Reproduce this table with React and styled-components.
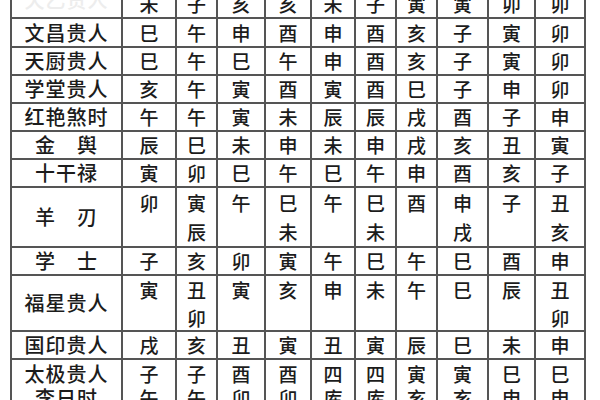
import React from "react";
import styled, { createGlobalStyle } from "styled-components";

const Global = createGlobalStyle`
  html, body { margin: 0; padding: 0; background: #ffffff; overflow: hidden; }
  body { width: 600px; height: 400px; }
`;

const COLS = [111, 54, 41, 48, 46, 44, 41, 41, 51, 47, 50];

const ROWS = [
  { label: "", faint: "天乙贵人", h: 29, values: ["未", "子", "亥", "亥", "未", "子", "寅", "寅", "卯", "卯"] },
  { label: "文昌贵人", h: 29, values: ["巳", "午", "申", "酉", "申", "酉", "亥", "子", "寅", "卯"] },
  { label: "天厨贵人", h: 28, values: ["巳", "午", "巳", "午", "申", "酉", "亥", "子", "寅", "卯"] },
  { label: "学堂贵人", h: 28, values: ["亥", "午", "寅", "酉", "寅", "酉", "巳", "子", "申", "卯"] },
  { label: "红艳煞时", h: 28, values: ["午", "午", "寅", "未", "辰", "辰", "戌", "酉", "子", "申"] },
  { label: "金　舆", h: 28, values: ["辰", "巳", "未", "申", "未", "申", "戌", "亥", "丑", "寅"] },
  { label: "十干禄", h: 28, values: ["寅", "卯", "巳", "午", "巳", "午", "申", "酉", "亥", "子"] },
  { label: "羊　刃", h: 60, lh: 29, pad: 0, values: ["卯", "寅辰", "午", "巳未", "午", "巳未", "酉", "申戌", "子", "丑亥"] },
  { label: "学　士", h: 28, values: ["子", "亥", "卯", "寅", "午", "巳", "午", "巳", "酉", "申"] },
  { label: "福星贵人", h: 56, lh: 28, pad: 0, values: ["寅", "丑卯", "寅", "亥", "申", "未", "午", "巳", "辰", "丑卯"] },
  { label: "国印贵人", h: 28, values: ["戌", "亥", "丑", "寅", "丑", "寅", "辰", "巳", "未", "申"] },
  { label: "太极贵人\n李日时", h: 60, lh: 24, pad: 2, stackLabel: true, values: ["子午", "子午", "酉卯", "酉卯", "四库", "四库", "寅亥", "寅亥", "巳申", "巳申"] },
];

const Page = styled.div`
  width: 600px;
  height: 400px;
  overflow: hidden;
  background: #ffffff;
  padding-left: 10px;
  box-sizing: border-box;
`;

const Table = styled.div`
  display: grid;
  grid-template-columns: ${COLS.map((c) => `${c}px`).join(" ")};
  grid-template-rows: ${ROWS.map((r) => `${r.h}px`).join(" ")};
  width: max-content;
  margin-top: -10px;
  border-left: 2px solid #555;
  font-family: "Noto Sans CJK SC", "Noto Sans CJK TC", sans-serif;
  color: #1c1c1c;
`;

const Cell = styled.div`
  box-sizing: border-box;
  border-right: 2px solid #555;
  border-bottom: 2px solid #555;
  display: flex;
  flex-direction: column;
  align-items: center;
  justify-content: ${(p) => (p.$top ? "flex-start" : "center")};
  padding-top: ${(p) => (p.$top ? `${p.$pad}px` : "0")};
  overflow: hidden;
`;

const Label = styled(Cell)`
  font-size: 20px;
  font-weight: 500;
  letter-spacing: 1px;
  white-space: pre;
  line-height: ${(p) => (p.$lh ? `${p.$lh}px` : "28px")};
  text-align: center;
`;

const Faint = styled.span`
  color: #ededed;
  margin-top: -8px;
`;

const Char = styled.span`
  display: block;
  font-size: 19px;
  font-weight: 500;
  line-height: ${(p) => `${p.$lh}px`};
`;

export default function App() {
  return (
    <>
      <Global />
      <Page>
        <Table>
          {ROWS.map((row, ri) => {
            const multi = row.values.some((v) => v.length > 1);
            const lh = row.lh || 26;
            return (
              <React.Fragment key={ri}>
                <Label $top={row.stackLabel} $pad={row.pad || 0} $lh={row.stackLabel ? lh : 0}>
                  {row.faint ? <Faint>{row.faint}</Faint> : row.label}
                </Label>
                {row.values.map((v, ci) => (
                  <Cell key={ci} $top={multi} $pad={row.pad || 0}>
                    {v.split("").map((ch, k) => (
                      <Char key={k} $lh={lh}>
                        {ch}
                      </Char>
                    ))}
                  </Cell>
                ))}
              </React.Fragment>
            );
          })}
        </Table>
      </Page>
    </>
  );
}
